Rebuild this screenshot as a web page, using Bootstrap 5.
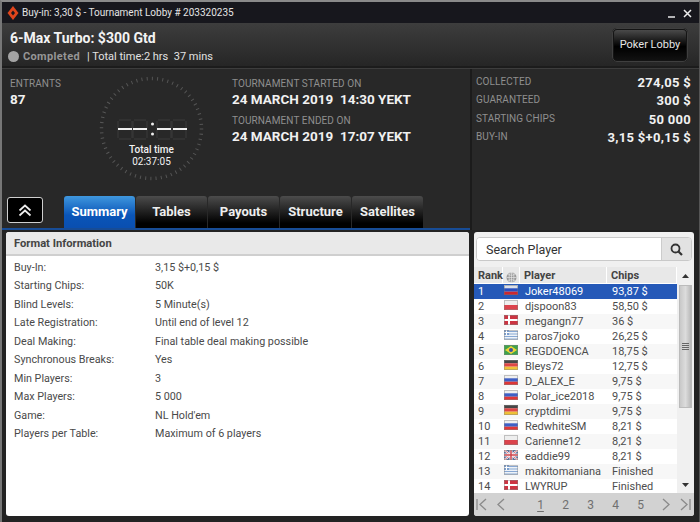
<!DOCTYPE html>
<html lang="en"><head><meta charset="utf-8"><title>Tournament Lobby</title>
<link href="https://cdn.jsdelivr.net/npm/bootstrap@5.3.0/dist/css/bootstrap.min.css" rel="stylesheet">
<style>
html,body{width:700px;height:522px;overflow:hidden;background:#222}
body{font-family:Roboto,"Liberation Sans",sans-serif;color:#fff;font-size:12px}
.win{width:700px;height:522px;border-top:2px solid #8a8a8a;border-left:2px solid #777;border-right:1px solid #555;display:flex;flex-direction:column;background:#282828}
.tbar{height:21px;background:#17171d;padding-left:4px;font-size:10px;color:#e4e4e4;gap:2px;flex:none}
.tctl{margin-left:auto;gap:7px;padding-right:7px;margin-top:1px}
.hdr{height:45px;flex:none;background:linear-gradient(#3d3d3d,#262626);padding:6px 8px 0;border-bottom:2px solid #1c1c1c;position:relative;box-shadow:0 1px 0 #3d3d3d}
.ttl{font-size:14px;font-weight:700;line-height:19px;color:#f3f3f3}
.stat-line{font-size:11px;line-height:15px;margin-top:1px;color:#e2e2e2;white-space:pre}
.dot{width:11px;height:11px;border-radius:50%;background:#a4a4a4;margin-left:-2px;margin-right:4px}
.cmp{font-size:11px;font-weight:700;color:#969696;margin-right:7px;letter-spacing:.35px}
.lobbybtn{margin-left:auto;margin-right:3px;margin-top:-1px;width:76px;height:34px;padding:0;border-radius:5px;background:linear-gradient(#4a4a4a,#000 55%,#111);border:2px solid #141414;outline:1px solid #3f3f3f;outline-offset:-1px;color:#e5e5e5;font-size:11px}
.info{height:161px;flex:none;margin-top:1px}
.infol{width:468px;flex:none;display:flex;flex-direction:column;border-bottom:2px solid #174c96}
.infor{flex:1;border-left:2px solid #1b1b1b;padding:6px 8px 0 4px}
.inftop{height:127px;flex:none;padding:7px 0 0 8px}
.lbl{font-size:10px;line-height:13px;color:#8f8f8f;letter-spacing:.1px}
.big{font-size:13.5px;font-weight:700;line-height:19px;color:#f1f1f1;white-space:pre}
.cl1{width:90px;flex:none;padding-top:1px}
.clock{width:110px;height:110px;flex:none;margin-left:-1px;margin-right:23px}
.cl3{flex:1;padding-top:1px}
.gap2{margin-top:5px}
.stt{height:18.4px}
.stt .lbl{margin-top:0}
.stt b{font-size:13px;font-weight:700;color:#f1f1f1;line-height:15px;letter-spacing:.3px}
.tabsr{height:32px;flex:none;padding-left:5px;align-items:flex-start}
.coll{width:36px;height:26px;padding:0;background:#000;border:1px solid #cfcfcf;border-radius:3px;margin-top:1px;margin-right:21px;display:flex;align-items:center;justify-content:center}
.tabnav{gap:1px;flex-wrap:nowrap}
.tabnav .nav-link{width:71px;height:32px;padding:0;font-size:13px;font-weight:700;color:#eee;text-align:center;line-height:31px;background:linear-gradient(#4c4c4c,#000 85%);border-radius:3px 3px 0 0;white-space:nowrap}
.tabnav .nav-link.active{background:linear-gradient(#3f97de,#0a55b8 60%,#0a4fb0);color:#fff}
.lower{flex:1;min-height:0;background:#232323;padding:2px 6px 6px 4px;gap:5px}
.fmt{width:463px;flex:none;border:0;border-radius:3px;overflow:hidden;background:#fff;color:#444}
.fmt .card-header{height:24px;padding:0 8px;line-height:23px;background:#e9e9e9;border-bottom:2px solid #cfcfcf;font-weight:700;font-size:11.2px;color:#444;border-radius:0}
.fmt .card-body{padding:3px 8px}
.fr{height:18.45px;line-height:18.45px;font-size:10.75px;color:#4a4a4a;margin:0}
.fr dt{width:141px;font-weight:400;margin:0}
.fr dd{margin:0}
.plist{width:220px;flex:none;background:#f0f0f0;border-radius:3px;overflow:hidden;display:flex;flex-direction:column;color:#444;padding-top:5px}
.srch{height:24px;margin:0 2px;flex:none;border:1px solid #c9c9c9;border-radius:4px;background:#fff;overflow:hidden}
.srch .form-control{border:0;height:22px;font-size:12.5px;padding:0 9px;color:#333;border-radius:0;background:#fff}
.srch .form-control::placeholder{color:#333;opacity:1}
.srch span{width:30px;flex:none;background:#e2e2e2;border-left:1px solid #ccc}
.tblw{flex:1;min-height:0;margin-top:6px;background:#f0f0f0}
.ptbl{table-layout:fixed;width:203px;margin:0;font-size:11px;color:#4d4d4d;--bs-table-bg:transparent;border-collapse:separate;border-spacing:0}
.ptbl th{height:17px;padding:0 0 0 4px;background:#e8e8e8;font-size:11px;font-weight:700;color:#444;border:0;border-right:1px solid #fff;line-height:15px;border-bottom:1px solid #fff}
.ptbl td{height:15px;padding:0 0 0 5px;line-height:15px;border:0;white-space:nowrap;overflow:hidden;background:#fff;color:#4d4d4d}
.ptbl td:first-child{padding-left:4px}
.ptbl th:nth-child(2){padding-left:3px}
.ptbl td:nth-child(2){padding-left:1px}
.ptbl tr:nth-child(odd) td{background:#f7f7f7}
.ptbl tr.sel td{background:#2559b8;color:#fff}
.ptbl svg{display:block;margin-top:1px}
.ptbl td svg{outline:1px solid rgba(120,120,120,.45);outline-offset:-1px;opacity:.9}
.sbar{width:17px;flex:none;background:#f0f0f0;display:flex;flex-direction:column;align-items:center;justify-content:flex-start;padding-right:1px}
.sbtn{height:17px;color:#333;display:flex;align-items:center;justify-content:center;flex:none}
.thumb{width:13px;height:123px;margin-top:1px;background:linear-gradient(90deg,#c8c8c8,#dcdcdc 50%,#b8b8b8);border:1px solid #bbb;display:flex;align-items:center;justify-content:center;flex:none}
.sfill{flex:1}
.pgr{height:23px;flex:none;background:#d2d2d2;font-size:12px;color:#707070;padding:0 3px 0 2px;position:relative}
.pgr .pn{width:25px;text-align:center;flex:none}
.pgr .pgn{margin-left:23px}
.pgr u{text-underline-offset:2px}
</style></head><body>
<svg width="0" height="0" class="position-absolute">
<symbol id="f-ru" viewBox="0 0 14 10"><rect width="14" height="10" fill="#eee"/><rect y="3.3" width="14" height="3.4" fill="#2a4fc0"/><rect y="6.7" width="14" height="3.3" fill="#d22"/></symbol>
<symbol id="f-pl" viewBox="0 0 14 10"><rect width="14" height="10" fill="#eee"/><rect y="5" width="14" height="5" fill="#d9303a"/></symbol>
<symbol id="f-dk" viewBox="0 0 14 10"><rect width="14" height="10" fill="#c8202f"/><rect x="4" width="2" height="10" fill="#fff"/><rect y="4" width="14" height="2" fill="#fff"/></symbol>
<symbol id="f-gr" viewBox="0 0 14 10"><rect width="14" height="10" fill="#eef2f8"/><path d="M0 1.500h14M0 4h14M0 6.500h14M0 9h14" stroke="#7b9fd0" stroke-width="1.100"/><rect width="5" height="5" fill="#6d94c9"/><path d="M2.500 0v5M0 2.500h5" stroke="#fff"/></symbol>
<symbol id="f-br" viewBox="0 0 14 10"><rect width="14" height="10" fill="#2a9a3a"/><path d="M7 1l6 4-6 4-6-4z" fill="#f0d020"/><circle cx="7" cy="5" r="2" fill="#25409a"/></symbol>
<symbol id="f-de" viewBox="0 0 14 10"><rect width="14" height="3.4" fill="#333"/><rect y="3.3" width="14" height="3.4" fill="#d33"/><rect y="6.7" width="14" height="3.3" fill="#eebb22"/></symbol>
<symbol id="f-uk" viewBox="0 0 14 10"><rect width="14" height="10" fill="#31508f"/><path d="M0 0l14 10M14 0L0 10" stroke="#fff" stroke-width="2"/><path d="M0 0l14 10M14 0L0 10" stroke="#c9303a" stroke-width=".7"/><path d="M7 0v10M0 5h14" stroke="#fff" stroke-width="3"/><path d="M7 0v10M0 5h14" stroke="#c9303a" stroke-width="1.500"/></symbol>
</svg>
<div class="win">
 <div class="tbar d-flex align-items-center">
  <svg width="14" height="14" viewBox="0 0 14 14"><path d="M7 0l5.500 7L7 14 1.500 7z" fill="#e0451c"/><path d="M7 4.500L9 7l-2 2.500L5 7z" fill="#17171d"/></svg>
  <span>Buy-in: 3,30 $ - Tournament Lobby # 203320235</span>
  <span class="tctl d-flex align-items-center">
   <svg width="9" height="9" viewBox="0 0 9 9"><path d="M1 8h7" stroke="#ddd" stroke-width="1.600"/></svg>
   <svg width="9" height="9" viewBox="0 0 9 9"><path d="M1 1l7 7M8 1L1 8" stroke="#eee" stroke-width="1.500"/></svg>
  </span>
 </div>
 <div class="hdr d-flex">
  <div>
   <div class="ttl">6-Max Turbo: $300 Gtd</div>
   <div class="stat-line d-flex align-items-center"><span class="dot"></span><span class="cmp">Completed</span><span>| Total time:2 hrs  37 mins</span></div>
  </div>
  <button type="button" class="btn lobbybtn">Poker Lobby</button>
 </div>
 <div class="info d-flex">
  <div class="infol">
   <div class="inftop d-flex">
    <div class="cl1"><div class="lbl">ENTRANTS</div><div class="big">87</div></div>
    <svg class="clock" viewBox="0 0 110 110">
     <circle cx="52.500" cy="52.500" r="50" fill="none" stroke="#555" stroke-width="3.500" stroke-dasharray="1 4.236"/>
     <g fill="none" stroke="#353535" stroke-width="1.500">
      <path d="M20 44h12M20 63h12M19 45v17M33 45v17M35 44h12M35 63h12M34 45v17M48 45v17M59 44h12M59 63h12M58 45v17M72 45v17M74 44h12M74 63h12M73 45v17M87 45v17"/>
     </g>
     <path d="M19 53h14M34 53h14M58 53h14M74 53h14" stroke="#f0f0f0" stroke-width="2"/>
     <circle cx="53.500" cy="48" r="1.500" fill="#eee"/><circle cx="53.500" cy="58" r="1.500" fill="#eee"/>
     <text x="52.500" y="77" text-anchor="middle" fill="#f2f2f2" font-size="10" font-weight="500" font-family="Roboto,sans-serif">Total time</text>
     <text x="52.500" y="88.500" text-anchor="middle" fill="#f2f2f2" font-size="10" font-family="Roboto,sans-serif">02:37:05</text>
    </svg>
    <div class="cl3">
     <div class="lbl">TOURNAMENT STARTED ON</div><div class="big">24 MARCH 2019  14:30 YEKT</div>
     <div class="lbl gap2">TOURNAMENT ENDED ON</div><div class="big">24 MARCH 2019  17:07 YEKT</div>
    </div>
   </div>
   <div class="tabsr d-flex">
    <button type="button" class="coll" aria-label="Collapse"><svg width="14" height="13" viewBox="0 0 14 13"><path d="M1.500 6.500L7 1.500l5.500 5M1.500 11.500L7 6.500l5.500 5" fill="none" stroke="#eee" stroke-width="1.700"/></svg></button>
    <ul class="nav tabnav">
     <li class="nav-item"><a class="nav-link active" href="#">Summary</a></li>
     <li class="nav-item"><a class="nav-link" href="#">Tables</a></li>
     <li class="nav-item"><a class="nav-link" href="#">Payouts</a></li>
     <li class="nav-item"><a class="nav-link" href="#">Structure</a></li>
     <li class="nav-item"><a class="nav-link" href="#">Satellites</a></li>
    </ul>
   </div>
  </div>
  <div class="infor">
   <div class="stt d-flex justify-content-between"><span class="lbl">COLLECTED</span><b>274,05 $</b></div>
   <div class="stt d-flex justify-content-between"><span class="lbl">GUARANTEED</span><b>300 $</b></div>
   <div class="stt d-flex justify-content-between"><span class="lbl">STARTING CHIPS</span><b>50 000</b></div>
   <div class="stt d-flex justify-content-between"><span class="lbl">BUY-IN</span><b>3,15 $+0,15 $</b></div>
  </div>
 </div>
 <div class="lower d-flex">
  <div class="card fmt">
   <div class="card-header">Format Information</div>
   <dl class="card-body mb-0">
    <div class="fr d-flex"><dt>Buy-In:</dt><dd>3,15 $+0,15 $</dd></div>
    <div class="fr d-flex"><dt>Starting Chips:</dt><dd>50K</dd></div>
    <div class="fr d-flex"><dt>Blind Levels:</dt><dd>5 Minute(s)</dd></div>
    <div class="fr d-flex"><dt>Late Registration:</dt><dd>Until end of level 12</dd></div>
    <div class="fr d-flex"><dt>Deal Making:</dt><dd>Final table deal making possible</dd></div>
    <div class="fr d-flex"><dt>Synchronous Breaks:</dt><dd>Yes</dd></div>
    <div class="fr d-flex"><dt>Min Players:</dt><dd>3</dd></div>
    <div class="fr d-flex"><dt>Max Players:</dt><dd>5 000</dd></div>
    <div class="fr d-flex"><dt>Game:</dt><dd>NL Hold'em</dd></div>
    <div class="fr d-flex"><dt>Players per Table:</dt><dd>Maximum of 6 players</dd></div>
   </dl>
  </div>
  <div class="plist">
   <div class="srch d-flex">
    <input class="form-control" type="text" placeholder="Search Player" aria-label="Search Player">
    <span class="d-flex align-items-center justify-content-center"><svg width="13" height="13" viewBox="0 0 13 13"><circle cx="5.500" cy="5.500" r="4" fill="none" stroke="#333" stroke-width="1.800"/><path d="M8.500 8.500L12 12" stroke="#333" stroke-width="2.200"/></svg></span>
   </div>
   <div class="tblw d-flex">
    <table class="table ptbl">
     <colgroup><col style="width:29px"><col style="width:17px"><col style="width:87px"><col style="width:70px"></colgroup>
     <thead><tr><th>Rank</th><th><svg width="11" height="11" viewBox="0 0 11 11"><circle cx="5.500" cy="5.500" r="5" fill="#999"/><path d="M.5 5.500h10M5.500.5v10M2 2.500c2 1 5 1 7 0M2 8.500c2-1 5-1 7 0" stroke="#eee" stroke-width=".6" fill="none"/><ellipse cx="5.500" cy="5.500" rx="2.400" ry="5" fill="none" stroke="#eee" stroke-width=".6"/></svg></th><th>Player</th><th>Chips</th></tr></thead>
     <tbody>
      <tr class="sel"><td>1</td><td><svg width="14" height="10"><use href="#f-ru"/></svg></td><td>Joker48069</td><td>93,87 $</td></tr>
      <tr><td>2</td><td><svg width="14" height="10"><use href="#f-pl"/></svg></td><td>djspoon83</td><td>58,50 $</td></tr>
      <tr><td>3</td><td><svg width="14" height="10"><use href="#f-dk"/></svg></td><td>megangn77</td><td>36 $</td></tr>
      <tr><td>4</td><td><svg width="14" height="10"><use href="#f-gr"/></svg></td><td>paros7joko</td><td>26,25 $</td></tr>
      <tr><td>5</td><td><svg width="14" height="10"><use href="#f-br"/></svg></td><td>REGDOENCA</td><td>18,75 $</td></tr>
      <tr><td>6</td><td><svg width="14" height="10"><use href="#f-de"/></svg></td><td>Bleys72</td><td>12,75 $</td></tr>
      <tr><td>7</td><td><svg width="14" height="10"><use href="#f-ru"/></svg></td><td>D_ALEX_E</td><td>9,75 $</td></tr>
      <tr><td>8</td><td><svg width="14" height="10"><use href="#f-ru"/></svg></td><td>Polar_ice2018</td><td>9,75 $</td></tr>
      <tr><td>9</td><td><svg width="14" height="10"><use href="#f-de"/></svg></td><td>cryptdimi</td><td>9,75 $</td></tr>
      <tr><td>10</td><td><svg width="14" height="10"><use href="#f-ru"/></svg></td><td>RedwhiteSM</td><td>8,21 $</td></tr>
      <tr><td>11</td><td><svg width="14" height="10"><use href="#f-pl"/></svg></td><td>Carienne12</td><td>8,21 $</td></tr>
      <tr><td>12</td><td><svg width="14" height="10"><use href="#f-uk"/></svg></td><td>eaddie99</td><td>8,21 $</td></tr>
      <tr><td>13</td><td><svg width="14" height="10"><use href="#f-gr"/></svg></td><td>makitomaniana</td><td>Finished</td></tr>
      <tr><td>14</td><td><svg width="14" height="10"><use href="#f-dk"/></svg></td><td>LWYRUP</td><td>Finished</td></tr>
     </tbody>
    </table>
    <div class="sbar">
     <div class="sbtn"><svg width="7" height="4" viewBox="0 0 7 4"><path d="M3.500 0L7 4H0z" fill="#333"/></svg></div>
     <div class="thumb"><svg width="7" height="7" viewBox="0 0 7 7"><path d="M0 .5h7M0 2.500h7M0 4.500h7M0 6.500h7" stroke="#666"/></svg></div>
     <div class="sfill"></div>
     <div class="sbtn"><svg width="7" height="4" viewBox="0 0 7 4"><path d="M3.500 4L7 0H0z" fill="#333"/></svg></div>
    </div>
   </div>
   <div class="pgr d-flex align-items-center">
    <svg width="12" height="13" viewBox="0 0 12 13"><path d="M1 1v11M10 1L4 6.500l6 5.500" fill="none" stroke="#8a8a8a" stroke-width="1.300"/></svg>
    <svg class="ms-2" width="9" height="13" viewBox="0 0 9 13"><path d="M8 1L2 6.500 8 12" fill="none" stroke="#8a8a8a" stroke-width="1.300"/></svg>
    <span class="pn pgn"><u>1</u></span><span class="pn">2</span><span class="pn">3</span><span class="pn">4</span><span class="pn">5</span>
    <svg class="ms-auto me-2" width="9" height="13" viewBox="0 0 9 13"><path d="M1 1l6 5.500L1 12" fill="none" stroke="#8a8a8a" stroke-width="1.300"/></svg>
    <svg width="12" height="13" viewBox="0 0 12 13"><path d="M11 1v11M2 1l6 5.500L2 12" fill="none" stroke="#8a8a8a" stroke-width="1.300"/></svg>
   </div>
  </div>
 </div>
</div>
<script src="https://cdn.jsdelivr.net/npm/bootstrap@5.3.0/dist/js/bootstrap.bundle.min.js"></script>
</body></html>
